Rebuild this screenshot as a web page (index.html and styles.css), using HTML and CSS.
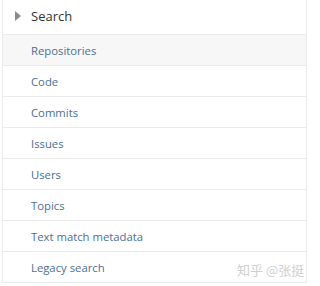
FILE: index.html
```html
<!DOCTYPE html>
<html lang="en">
<head>
  <meta charset="UTF-8">
  <title>Search</title>
  <link rel="stylesheet" href="styles.css">
</head>
<body>
  <div class="menu">
    <div class="menu-header">
      <span class="caret"></span>
      <span class="menu-title">Search</span>
    </div>
    <a class="menu-item selected" href="#">Repositories</a>
    <a class="menu-item" href="#">Code</a>
    <a class="menu-item" href="#">Commits</a>
    <a class="menu-item" href="#">Issues</a>
    <a class="menu-item" href="#">Users</a>
    <a class="menu-item" href="#">Topics</a>
    <a class="menu-item" href="#">Text match metadata</a>
    <a class="menu-item" href="#">Legacy search</a>
  </div>
  <div class="watermark">知乎 @张挺</div>
</body>
</html>
```
FILE: styles.css
```css
body {
  margin: 0;
  background-color: #ffffff;
  font-family: "Open Sans", "Noto Sans", sans-serif;
  position: relative;
  width: 320px;
  height: 286px;
  overflow: hidden;
}

.menu {
  margin-left: 2px;
  width: 303px;
  border-left: 1px solid #ebebeb;
  border-right: 1px solid #ebebeb;
}

.menu-header {
  display: flex;
  align-items: center;
  height: 34px;
  border-bottom: 1px solid #ebebeb;
}

.caret {
  width: 0;
  height: 0;
  margin-left: 12px;
  margin-right: 10px;
  margin-top: -2px;
  border-top: 5px solid transparent;
  border-bottom: 5px solid transparent;
  border-left: 6px solid #8a8a8a;
}

.menu-title {
  font-size: 13px;
  color: #333333;
  margin-top: -2px;
}

.menu-item {
  display: flex;
  align-items: center;
  height: 30px;
  padding-left: 28px;
  border-bottom: 1px solid #ebebeb;
  font-size: 11.3px;
  color: #4a6f95;
  text-decoration: none;
}

.menu-item.selected {
  background-color: #f7f7f7;
}

.watermark {
  position: absolute;
  left: 237px;
  top: 260px;
  font-family: "Noto Sans CJK SC", sans-serif;
  font-size: 13px;
  color: #d0d0d0;
}
```
